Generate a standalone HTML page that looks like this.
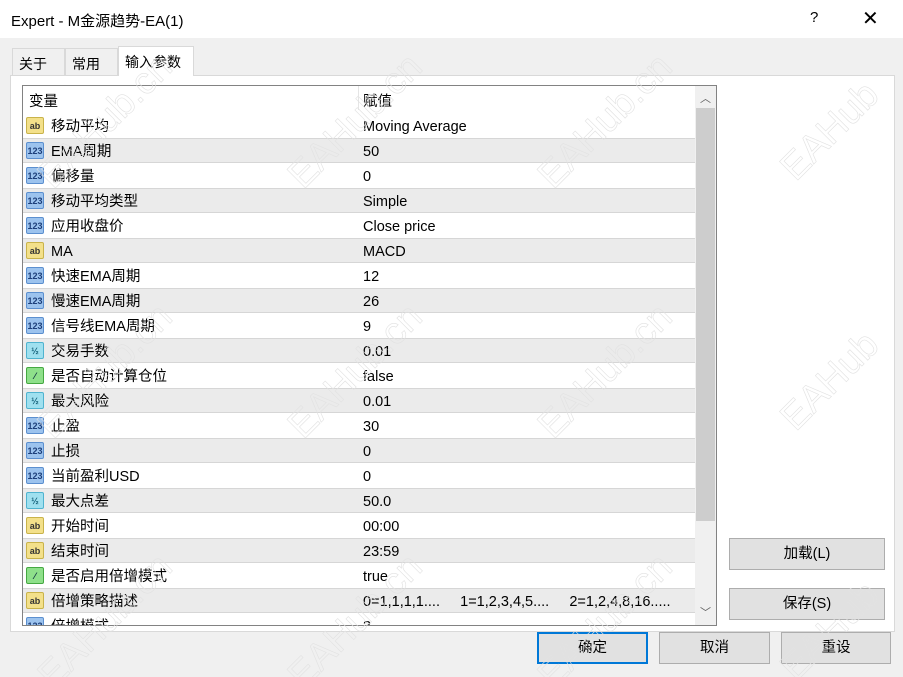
<!DOCTYPE html>
<html><head><meta charset="utf-8"><style>
*{box-sizing:border-box;margin:0;padding:0}
html,body{width:903px;height:677px;overflow:hidden}
body{background:#f0f0f0;font-family:"Liberation Sans","Noto Sans CJK SC",sans-serif;font-size:14.5px;color:#000;position:relative}
.abs{position:absolute}
.title{left:0;top:0;width:903px;height:38px;background:#fff;}
.title span{position:absolute;left:11px;top:10px;font-size:15px}
.tab{top:48px;height:27px;border:1px solid #d9d9d9;border-bottom:none;background:#f0f0f0;padding:5px 6px;font-size:14px}
.panel{left:10px;top:75px;width:885px;height:557px;background:#fff;border:1px solid #d9d9d9}
.list{left:22px;top:85px;width:695px;height:541px;border:1px solid #828282;background:#fff;overflow:hidden}
.row{position:absolute;left:0;width:672px;height:25px;line-height:25px}
.row.g{background:#ebebeb;box-shadow:inset 0 1px 0 #d6d6d6,inset 0 -1px 0 #d6d6d6}
.row .n{position:absolute;left:28px;top:2px}
.row .v{position:absolute;left:340px;top:2px}
.ic{position:absolute;left:3px;top:4px;width:18px;height:17px;border-radius:2px;font-size:9px;font-weight:bold;text-align:center;line-height:16px}
.ab{background:#f3e08a;border:1px solid #c9b34a;color:#333}
.n3{background:#9cc3ee;border:1px solid #5b8fcf;color:#1d3f7a}
.hf{background:#9fe0ef;border:1px solid #4fb3cf;color:#14607a}
.bl{background:#8ee08a;border:1px solid #45a842;color:#134}
.sb{left:672px;top:0;width:21px;height:539px;background:#f0f0f0}
.btn{height:32px;border:1px solid #adadad;background:#e1e1e1;text-align:center;line-height:31px}
.wm{position:absolute;color:transparent;-webkit-text-stroke:0.6px #e2e2e2;font-size:38px;transform:rotate(-45deg);font-family:"Liberation Sans",sans-serif;white-space:nowrap}
</style></head><body>
<div class="abs title"><span>Expert - M金源趋势-EA(1)</span>
<span style="left:810px;top:9px">?</span><span style="left:862px;top:6px;font-size:20px">✕</span></div>
<div class="abs panel"></div>
<div class="abs tab" style="left:12px;width:53px">关于</div>
<div class="abs tab" style="left:65px;width:53px">常用</div>
<div class="abs tab" style="left:118px;top:46px;height:30px;width:76px;background:#fff;">输入参数</div>
<div class="abs list">
<div class="row" style="top:2px"><span class="n" style="left:6px">变量</span><span class="v">赋值</span></div>
<div style="position:absolute;left:335px;top:0;width:1px;height:24px;background:#e5e5e5"></div>
<div class="row" style="top:27px"><div class="ic ab">ab</div><span class="n">移动平均</span><span class="v">Moving Average</span></div>
<div class="row g" style="top:52px"><div class="ic n3">123</div><span class="n">EMA周期</span><span class="v">50</span></div>
<div class="row" style="top:77px"><div class="ic n3">123</div><span class="n">偏移量</span><span class="v">0</span></div>
<div class="row g" style="top:102px"><div class="ic n3">123</div><span class="n">移动平均类型</span><span class="v">Simple</span></div>
<div class="row" style="top:127px"><div class="ic n3">123</div><span class="n">应用收盘价</span><span class="v">Close price</span></div>
<div class="row g" style="top:152px"><div class="ic ab">ab</div><span class="n">MA</span><span class="v">MACD</span></div>
<div class="row" style="top:177px"><div class="ic n3">123</div><span class="n">快速EMA周期</span><span class="v">12</span></div>
<div class="row g" style="top:202px"><div class="ic n3">123</div><span class="n">慢速EMA周期</span><span class="v">26</span></div>
<div class="row" style="top:227px"><div class="ic n3">123</div><span class="n">信号线EMA周期</span><span class="v">9</span></div>
<div class="row g" style="top:252px"><div class="ic hf">½</div><span class="n">交易手数</span><span class="v">0.01</span></div>
<div class="row" style="top:277px"><div class="ic bl">⁄</div><span class="n">是否自动计算仓位</span><span class="v">false</span></div>
<div class="row g" style="top:302px"><div class="ic hf">½</div><span class="n">最大风险</span><span class="v">0.01</span></div>
<div class="row" style="top:327px"><div class="ic n3">123</div><span class="n">止盈</span><span class="v">30</span></div>
<div class="row g" style="top:352px"><div class="ic n3">123</div><span class="n">止损</span><span class="v">0</span></div>
<div class="row" style="top:377px"><div class="ic n3">123</div><span class="n">当前盈利USD</span><span class="v">0</span></div>
<div class="row g" style="top:402px"><div class="ic hf">½</div><span class="n">最大点差</span><span class="v">50.0</span></div>
<div class="row" style="top:427px"><div class="ic ab">ab</div><span class="n">开始时间</span><span class="v">00:00</span></div>
<div class="row g" style="top:452px"><div class="ic ab">ab</div><span class="n">结束时间</span><span class="v">23:59</span></div>
<div class="row" style="top:477px"><div class="ic bl">⁄</div><span class="n">是否启用倍增模式</span><span class="v">true</span></div>
<div class="row g" style="top:502px"><div class="ic ab">ab</div><span class="n">倍增策略描述</span><span class="v">0=1,1,1,1....&nbsp;&nbsp;&nbsp;&nbsp; 1=1,2,3,4,5....&nbsp;&nbsp;&nbsp;&nbsp; 2=1,2,4,8,16.....</span></div>
<div class="row" style="top:527px"><div class="ic n3">123</div><span class="n">倍增模式</span><span class="v">3</span></div>
<div class="abs sb"><div class="abs" style="left:5px;top:4px;font-size:11px;color:#606060">︿</div>
<div class="abs" style="left:1px;top:22px;width:19px;height:413px;background:#cdcdcd"></div>
<div class="abs" style="left:5px;top:518px;font-size:11px;color:#606060">﹀</div></div>
</div>
<div class="abs btn" style="left:729px;top:538px;width:156px">加载(L)</div>
<div class="abs btn" style="left:729px;top:588px;width:156px">保存(S)</div>
<div class="abs btn" style="left:537px;top:632px;width:111px;border:2px solid #0078d7;line-height:29px">确定</div>
<div class="abs btn" style="left:659px;top:632px;width:111px">取消</div>
<div class="abs btn" style="left:781px;top:632px;width:110px">重设</div>
<div class="wm" style="left:20px;top:100px">EAHub.cn</div>
<div class="wm" style="left:270px;top:100px">EAHub.cn</div>
<div class="wm" style="left:520px;top:100px">EAHub.cn</div>
<div class="wm" style="left:770px;top:110px">EAHub</div>
<div class="wm" style="left:20px;top:350px">EAHub.cn</div>
<div class="wm" style="left:270px;top:350px">EAHub.cn</div>
<div class="wm" style="left:520px;top:350px">EAHub.cn</div>
<div class="wm" style="left:770px;top:360px">EAHub</div>
<div class="wm" style="left:20px;top:600px">EAHub.cn</div>
<div class="wm" style="left:270px;top:600px">EAHub.cn</div>
<div class="wm" style="left:520px;top:600px">EAHub.cn</div>
<div class="wm" style="left:770px;top:610px">EAHub</div>
</body></html>
